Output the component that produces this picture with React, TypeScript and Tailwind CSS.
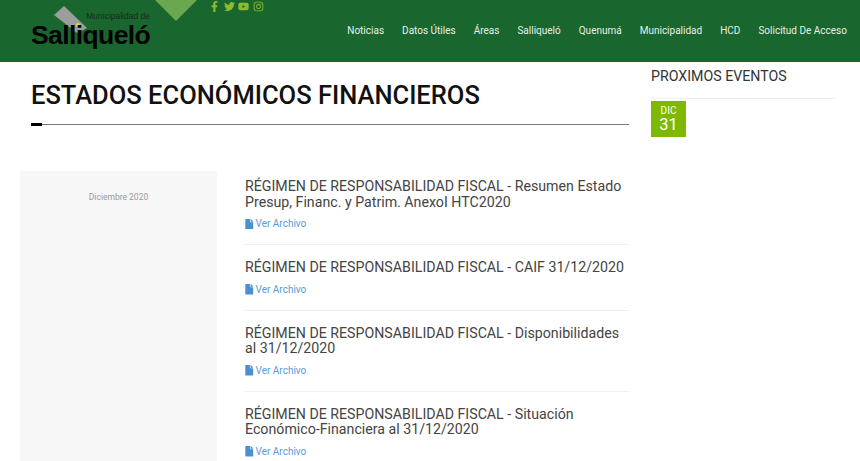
import { FaFacebookF, FaTwitter, FaYoutube, FaInstagram, FaFile } from "react-icons/fa";

const navItems = ["Noticias", "Datos Útiles", "Áreas", "Salliqueló", "Quenumá", "Municipalidad", "HCD", "Solicitud De Acceso"];

const documents = [
  { title: "RÉGIMEN DE RESPONSABILIDAD FISCAL - Resumen Estado Presup, Financ. y Patrim. AnexoI HTC2020" },
  { title: "RÉGIMEN DE RESPONSABILIDAD FISCAL - CAIF 31/12/2020" },
  { title: "RÉGIMEN DE RESPONSABILIDAD FISCAL - Disponibilidades al 31/12/2020" },
  { title: "RÉGIMEN DE RESPONSABILIDAD FISCAL - Situación Económico-Financiera al 31/12/2020" },
];

const Header = () => {
  return (
    <header className="relative h-[62px] bg-[#19672e] flex items-center justify-end pr-[13px] shrink-0">
      <svg className="absolute left-0 top-0" width="200" height="40" viewBox="0 0 200 40">
        <polygon points="64,6 54,15 77,33 87,28" fill="#9a9f9c" />
        <circle cx="78" cy="25" r="2" fill="#e8d83a" />
        <polygon points="155,0 197,0 176,21" fill="#6aa84f" />
      </svg>
      <div className="absolute left-[31px] top-[11px] w-[119px] text-right text-black font-['Liberation_Sans',sans-serif]">
        <p className="text-[8.5px] leading-[10px] text-[#1b2a1e]">Municipalidad de</p>
        <p className="mt-[2px] text-[26.5px] leading-[24px] font-bold tracking-[-0.6px]">Salliqueló</p>
      </div>
      <div className="absolute left-[209px] top-[1px] flex items-center gap-[3.5px] text-[#8dbb2f] text-[11px]">
        <FaFacebookF />
        <FaTwitter />
        <FaYoutube />
        <FaInstagram />
      </div>
      <nav className="flex gap-[18px] text-[10px] text-[#e6efe8] font-['Roboto',sans-serif] pb-[1px]">
        {navItems.map((item) => (
          <span key={item}>{item}</span>
        ))}
      </nav>
    </header>
  );
};

const App = () => {
  return (
    <div className="h-[461px] w-[860px] overflow-hidden bg-white font-['Roboto',sans-serif] flex flex-col">
      <Header />
      <main className="flex flex-1 pl-5">
        <section className="w-[609px]">
          <div className="pl-[11px] pt-[18px]">
            <h1 className="text-[25.5px] leading-[30px] font-medium text-[#111]">ESTADOS ECONÓMICOS FINANCIEROS</h1>
            <div className="mt-[13px] h-[3px] flex items-center relative">
              <div className="w-[11px] h-[3px] bg-black" />
              <div className="flex-1 h-px bg-[#777]" />
            </div>
          </div>
          <div className="flex mt-[45px]">
            <aside className="w-[197px] h-[300px] bg-[#f7f7f7] text-center pt-[21px] text-[8.5px] leading-[11px] text-[#999]">
              Diciembre 2020
            </aside>
            <div className="flex-1 pl-[28px] pt-[8px]">
              {documents.map((doc, i) => (
                <article key={doc.title} className={i === 0 ? "pb-[13px] border-b border-[#f0f0f0]" : "pt-[15px] pb-[13px] border-b border-[#f0f0f0]"}>
                  <h2 className="text-[14.2px] leading-[15.5px] text-[#444]">{doc.title}</h2>
                  <a className="mt-[7px] flex items-center gap-[1px] text-[10px] leading-[14px] text-[#5a9bd8]">
                    <FaFile className="text-[#4a8fd0] text-[10.5px] -ml-[1px]" />
                    Ver Archivo
                  </a>
                </article>
              ))}
            </div>
          </div>
        </section>
        <aside className="ml-[22px] w-[185px] pt-[6px]">
          <h3 className="text-[14.2px] leading-[16px] text-[#333]">PROXIMOS EVENTOS</h3>
          <div className="mt-[14px] h-px bg-[#f0f0f0]" />
          <div className="mt-[2px] w-[35px] h-[36px] bg-[#7fb800] text-white flex flex-col items-center pt-[5px]">
            <span className="text-[10px] leading-[10px]">DIC</span>
            <span className="text-[16.5px] leading-[17px]">31</span>
          </div>
        </aside>
      </main>
    </div>
  );
};

export default App;
